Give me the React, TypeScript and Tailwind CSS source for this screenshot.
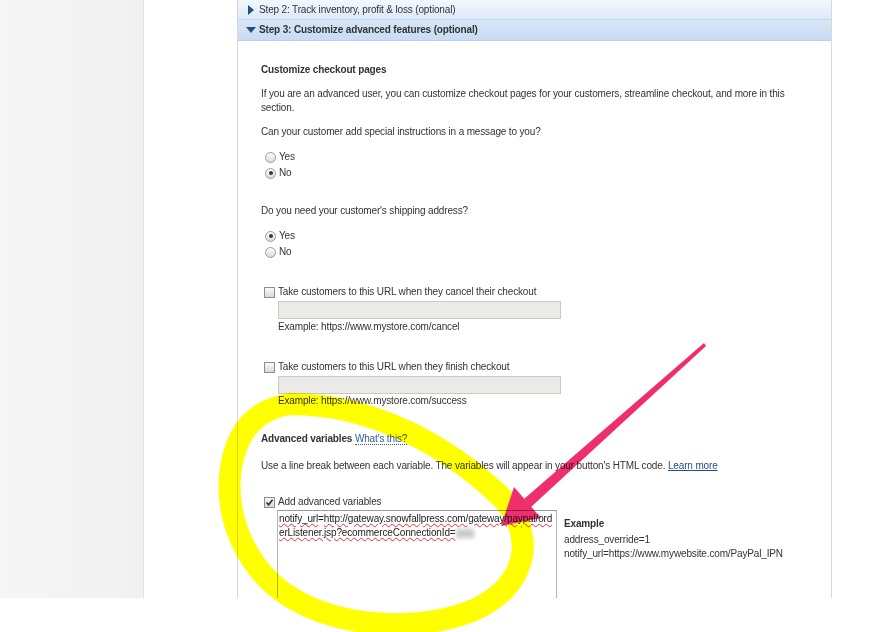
import React from 'react';

const Radio = ({ checked }: { checked?: boolean }) => (
    <span className="w-[11px] h-[11px] rounded-full border border-[#9c9c9c] bg-gradient-to-b from-[#fdfdfd] to-[#dadada] flex items-center justify-center">
        {checked && <span className="w-[4px] h-[4px] rounded-full bg-[#3a3a3a]" />}
    </span>
);

const Checkbox = ({ checked }: { checked?: boolean }) => (
    <span className="w-[11px] h-[11px] border border-[#8e8e8e] bg-gradient-to-b from-[#fafafa] to-[#d8d8d8] flex items-center justify-center">
        {checked && (
            <svg width="9" height="9" viewBox="0 0 9 9">
                <path d="M1.5 4.5 L3.6 6.8 L7.6 1.8" fill="none" stroke="#2b2b2b" strokeWidth="1.6" />
            </svg>
        )}
    </span>
);

const App = () => {
    return (
        <div className="relative w-[889px] h-[632px] bg-white overflow-hidden font-['Liberation_Sans',Arial,sans-serif] text-[10px] tracking-[-0.15px] leading-[14px] text-[#333]">
            <div className="flex h-[598px]">
                <div className="w-[144px] bg-gradient-to-r from-[#f6f6f6] to-[#f1f1f1] border-r border-[#e3e3e3]" />
                <div className="w-[93px]" />
                <div className="w-[595px] border-x border-[#d8d8d8] flex flex-col overflow-hidden">
                    <div className="h-[20px] shrink-0 flex items-center pl-[10px] border-b border-[#c9d9ec] bg-gradient-to-b from-[#f3f8fe] to-[#dde9f8]">
                        <svg width="6" height="10" viewBox="0 0 6 10" className="mr-[5px]">
                            <path d="M0 0 L6 5 L0 10 Z" fill="#24527f" />
                        </svg>
                        <span>Step 2: Track inventory, profit &amp; loss (optional)</span>
                    </div>
                    <div className="h-[21px] shrink-0 flex items-center pl-[8px] border-b border-[#bcd0e8] bg-gradient-to-b from-[#d6e6f7] to-[#c9dcf2] font-bold">
                        <svg width="10" height="6" viewBox="0 0 10 6" className="mr-[3px]">
                            <path d="M0 0 L10 0 L5 6 Z" fill="#24527f" />
                        </svg>
                        <span>Step 3: Customize advanced features (optional)</span>
                    </div>

                    <div className="pl-[23px] pt-[22px] flex flex-col">
                        <div className="font-bold">Customize checkout pages</div>
                        <p className="mt-[10px] w-[545px]">
                            If you are an advanced user, you can customize checkout pages for your customers, streamline checkout, and more in this section.
                        </p>
                        <div className="mt-[10px]">Can your customer add special instructions in a message to you?</div>
                        <div className="mt-[10px] h-[16px] flex items-center gap-[3px] pl-[4px]">
                            <Radio />
                            <span>Yes</span>
                        </div>
                        <div className="h-[16px] flex items-center gap-[3px] pl-[4px]">
                            <Radio checked />
                            <span>No</span>
                        </div>

                        <div className="mt-[23px]">Do you need your customer's shipping address?</div>
                        <div className="mt-[10px] h-[16px] flex items-center gap-[3px] pl-[4px]">
                            <Radio checked />
                            <span>Yes</span>
                        </div>
                        <div className="h-[16px] flex items-center gap-[3px] pl-[4px]">
                            <Radio />
                            <span>No</span>
                        </div>

                        <div className="mt-[25px] h-[14px] flex items-center gap-[3px] pl-[3px]">
                            <Checkbox />
                            <span>Take customers to this URL when they cancel their checkout</span>
                        </div>
                        <div className="mt-[2px] ml-[17px] w-[283px] h-[18px] bg-[#ebeae7] border border-[#c9c9c9]" />
                        <div className="mt-[1px] ml-[17px]">Example: https://www.mystore.com/cancel</div>

                        <div className="mt-[26px] h-[14px] flex items-center gap-[3px] pl-[3px]">
                            <Checkbox />
                            <span>Take customers to this URL when they finish checkout</span>
                        </div>
                        <div className="mt-[2px] ml-[17px] w-[283px] h-[18px] bg-[#ebeae7] border border-[#c9c9c9]" />
                        <div className="ml-[17px]">Example: https://www.mystore.com/success</div>

                        <div className="mt-[24px]">
                            <span className="font-bold">Advanced variables</span>{' '}
                            <span className="text-[#2d5c96] border-b border-dotted border-[#2d5c96]">What's this?</span>
                        </div>
                        <div className="mt-[13px]">
                            Use a line break between each variable. The variables will appear in your button's HTML code.{' '}
                            <span className="text-[#24508a] underline">Learn more</span>
                        </div>

                        <div className="mt-[22px] h-[14px] flex items-center gap-[3px] pl-[3px]">
                            <Checkbox checked />
                            <span>Add advanced variables</span>
                        </div>
                        <div className="mt-[1px] flex items-start">
                            <div className="ml-[16px] w-[280px] h-[100px] shrink-0 border border-[#b4b4b4] border-t-[#9a9a9a] pl-[1px] pt-[1px] overflow-hidden whitespace-nowrap text-[#222]">
                                <div>
                                    <span className="underline decoration-wavy decoration-[#e03030] decoration-1">notify_url</span>=
                                    <span className="underline decoration-wavy decoration-[#e03030] decoration-1">http://gateway.snowfallpress.com/gateway/paypal/ord</span>
                                </div>
                                <div>
                                    <span className="underline decoration-wavy decoration-[#e03030] decoration-1">erListener.jsp?ecommerceConnectionId=</span>
                                    <span className="inline-block align-middle w-[18px] h-[9px] bg-[#c8c8c8] blur-[2px]" />
                                </div>
                            </div>
                            <div className="ml-[7px] pt-[7px]">
                                <div className="font-bold">Example</div>
                                <div className="mt-[2px]">address_override=1</div>
                                <div>notify_url=https://www.mywebsite.com/PayPal_IPN</div>
                            </div>
                        </div>
                    </div>
                </div>
            </div>

            <svg
                width="889"
                height="632"
                viewBox="0 0 889 632"
                className="absolute inset-0 pointer-events-none mix-blend-multiply"
            >
                <path
                    d="M290 404 C 375 404, 450 448, 500 496 C 535 530, 532 584, 474 610 C 420 632, 345 628, 295 600 C 250 574, 226 524, 230 476 C 234 436, 252 410, 290 404"
                    fill="none"
                    stroke="#ffff00"
                    strokeWidth="22"
                    strokeLinecap="round"
                />
                <polygon points="706,346 704,343 524,499 531,507" fill="#ef2f6c" />
                <polygon points="501,526 514,487 541,518" fill="#ef2f6c" />
            </svg>
        </div>
    );
};

export default App;
